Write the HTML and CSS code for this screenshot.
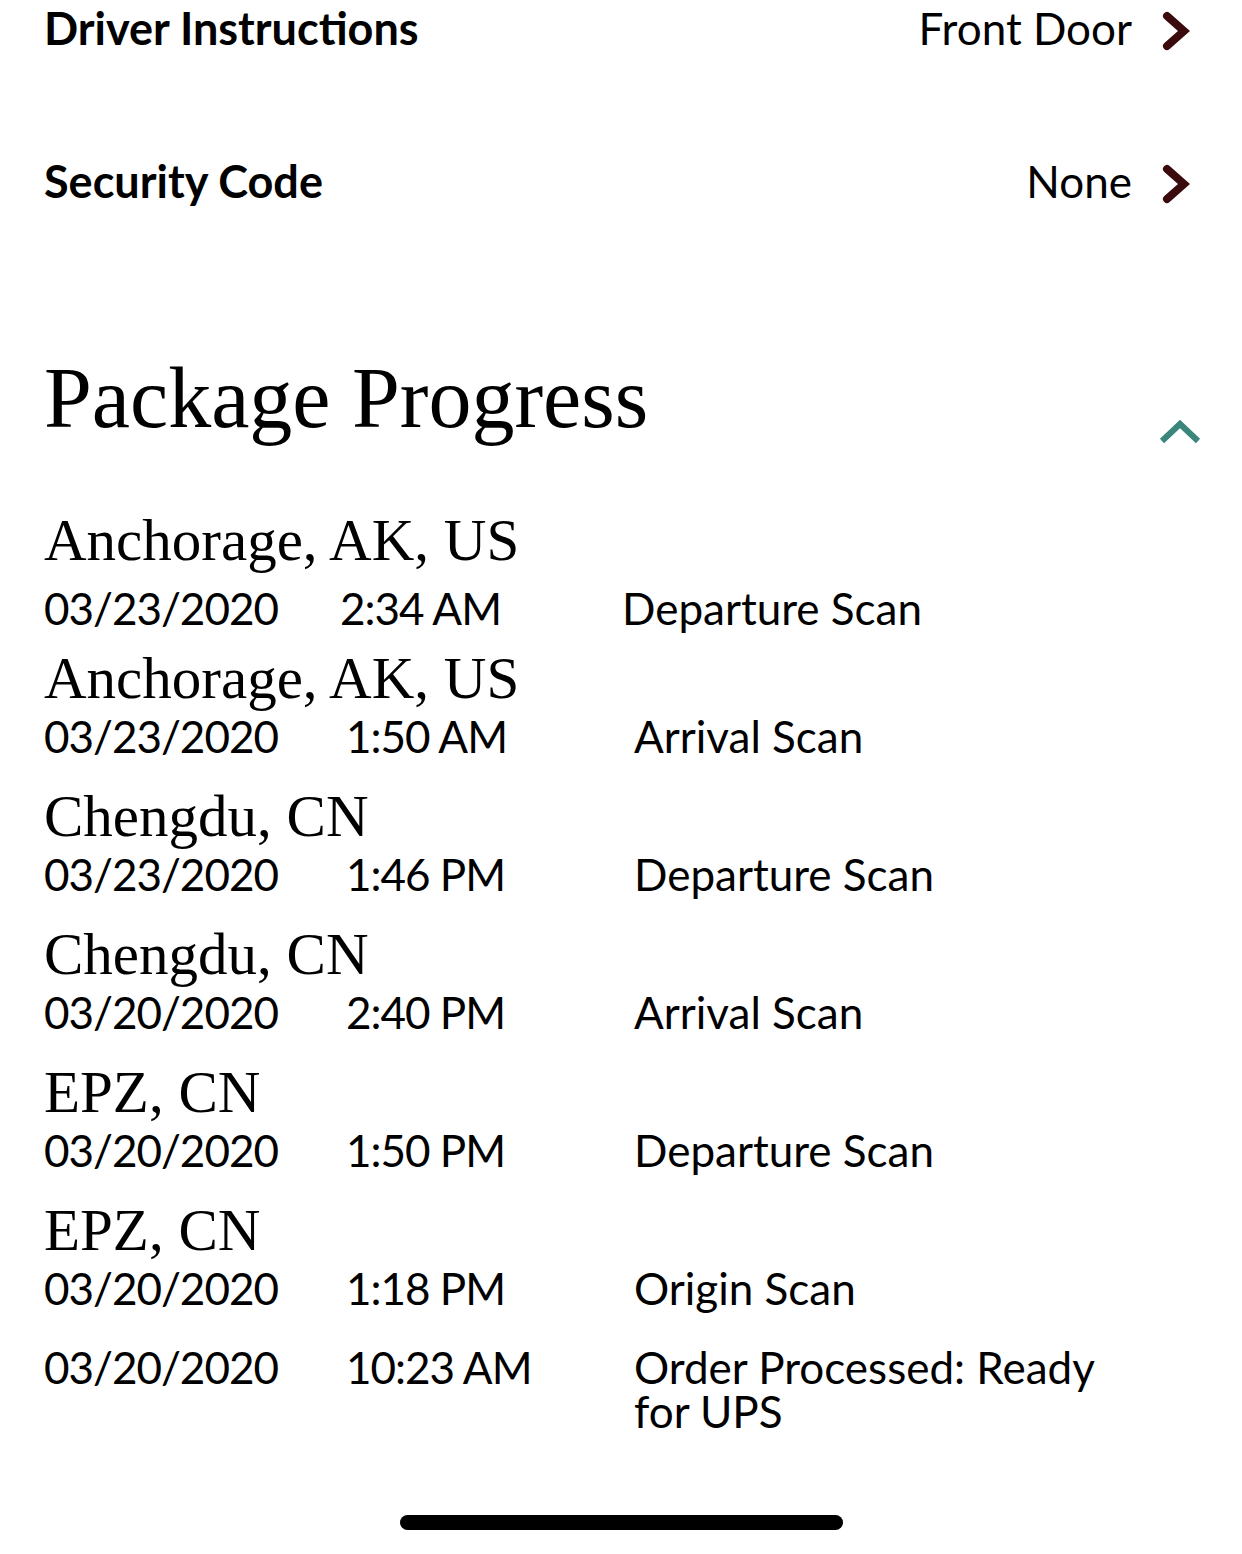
FILE: index.html
```html
<!DOCTYPE html>
<html>
<head>
<meta charset="utf-8">
<link rel="stylesheet" href="styles.css">
</head>
<body>
<div class="page">
  <section class="settings">
    <div class="setting">
      <span class="label">Driver Instructions</span>
      <span class="value">Front Door
        <svg class="chev" viewBox="0 0 28 40" width="28" height="40"><path d="M5 5 L22 20 L5 35" fill="none" stroke="#3b0a0c" stroke-width="8" stroke-linecap="round" stroke-linejoin="miter"/></svg>
      </span>
    </div>
    <div class="setting">
      <span class="label">Security Code</span>
      <span class="value">None
        <svg class="chev" viewBox="0 0 28 40" width="28" height="40"><path d="M5 5 L22 20 L5 35" fill="none" stroke="#3b0a0c" stroke-width="8" stroke-linecap="round" stroke-linejoin="miter"/></svg>
      </span>
    </div>
  </section>

  <section class="progress">
    <div class="progress-head">
      <h2 class="title">Package Progress</h2>
      <svg class="up" viewBox="0 0 44 30" width="44" height="30"><path d="M4 25 L22 8 L40 25" fill="none" stroke="#3a867c" stroke-width="6"/></svg>
    </div>

    <div class="entry first">
      <div class="loc">Anchorage, AK, US</div>
      <div class="row"><span class="num">03/23/2020</span><span class="num">2:34 AM</span><span>Departure Scan</span></div>
    </div>
    <div class="entry">
      <div class="loc">Anchorage, AK, US</div>
      <div class="row"><span class="num">03/23/2020</span><span class="num">1:50 AM</span><span>Arrival Scan</span></div>
    </div>
    <div class="entry">
      <div class="loc">Chengdu, CN</div>
      <div class="row"><span class="num">03/23/2020</span><span class="num">1:46 PM</span><span>Departure Scan</span></div>
    </div>
    <div class="entry">
      <div class="loc">Chengdu, CN</div>
      <div class="row"><span class="num">03/20/2020</span><span class="num">2:40 PM</span><span>Arrival Scan</span></div>
    </div>
    <div class="entry">
      <div class="loc">EPZ, CN</div>
      <div class="row"><span class="num">03/20/2020</span><span class="num">1:50 PM</span><span>Departure Scan</span></div>
    </div>
    <div class="entry">
      <div class="loc">EPZ, CN</div>
      <div class="row"><span class="num">03/20/2020</span><span class="num">1:18 PM</span><span>Origin Scan</span></div>
    </div>
    <div class="entry noloc">
      <div class="row"><span class="num">03/20/2020</span><span class="num">10:23 AM</span><span>Order Processed: Ready for UPS</span></div>
    </div>
  </section>
</div>
<div class="home-indicator"></div>
</body>
</html>
```
FILE: styles.css
```css
html, body {
  margin: 0;
  padding: 0;
  background: #ffffff;
  color: #000000;
}
body {
  width: 1242px;
  height: 1554px;
  position: relative;
  overflow: hidden;
  font-family: "Lato", "Open Sans", "Liberation Sans", sans-serif;
}
.page {
  padding: 0 0 0 44px;
}
.settings {
  display: flex;
  flex-direction: column;
  gap: 97px;
  padding-right: 52px;
}
.setting {
  display: flex;
  justify-content: space-between;
  align-items: center;
  height: 56px;
}
.label {
  font-weight: 700;
  font-size: 45px;
  line-height: 56px;
}
.value {
  display: flex;
  align-items: center;
  gap: 30px;
  font-size: 44px;
  line-height: 56px;
}
.chev {
  display: block;
  margin-top: 6px;
}
.progress {
  margin-top: 139px;
}
.progress-head {
  display: flex;
  justify-content: space-between;
  align-items: flex-end;
  padding-right: 40px;
  margin-bottom: 61px;
}
.title {
  margin: 0;
  font-family: "Liberation Serif", "Times New Roman", serif;
  font-weight: 400;
  font-size: 86px;
  line-height: 100px;
}
.up {
  display: block;
  margin-bottom: 2px;
}
.entry {
  margin-bottom: 27px;
}
.loc {
  font-family: "Liberation Serif", "Times New Roman", serif;
  font-size: 59px;
  line-height: 62px;
}
.row {
  display: grid;
  grid-template-columns: 302px 288px 500px;
  margin-top: 5px;
  font-size: 44px;
  line-height: 44px;
}
.num {
  letter-spacing: -1px;
}
.entry.first .row {
  grid-template-columns: 296px 282px 500px;
  margin-top: 15px;
}
.entry.first {
  margin-bottom: 17px;
}
.entry.noloc {
  margin-top: 35px;
}
.home-indicator {
  position: absolute;
  left: 400px;
  top: 1515px;
  width: 443px;
  height: 15px;
  border-radius: 8px;
  background: #000000;
}
```
